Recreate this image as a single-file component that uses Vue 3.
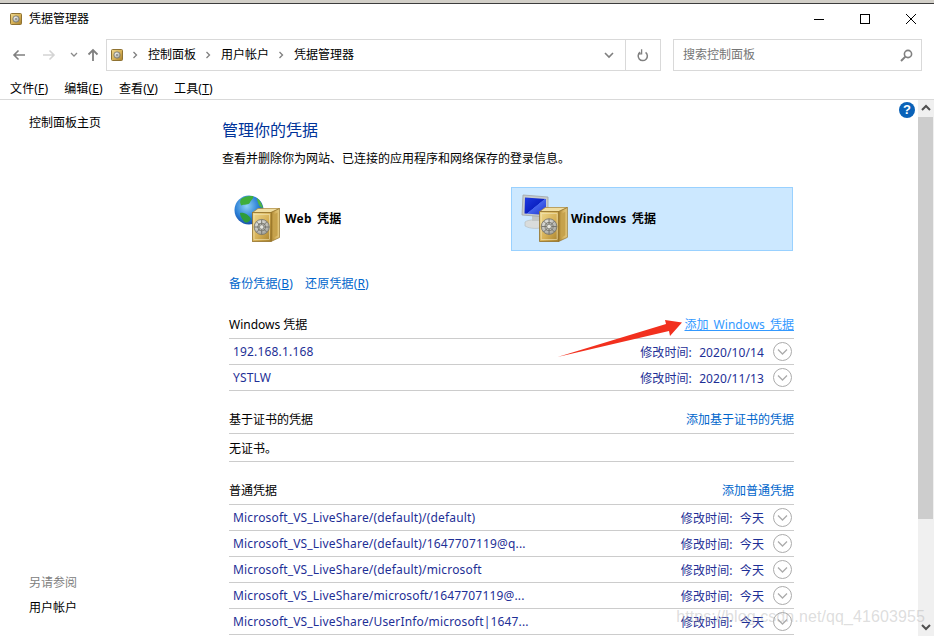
<script setup>
const menus = [
  { label: '文件', key: 'F' },
  { label: '编辑', key: 'E' },
  { label: '查看', key: 'V' },
  { label: '工具', key: 'T' },
]

const crumbs = ['控制面板', '用户帐户', '凭据管理器']

const windowsRows = [
  { name: '192.168.1.168', date: '2020/10/14' },
  { name: 'YSTLW', date: '2020/11/13' },
]

const genericRows = [
  { name: 'Microsoft_VS_LiveShare/(default)/(default)', date: '今天' },
  { name: 'Microsoft_VS_LiveShare/(default)/1647707119@q...', date: '今天' },
  { name: 'Microsoft_VS_LiveShare/(default)/microsoft', date: '今天' },
  { name: 'Microsoft_VS_LiveShare/microsoft/1647707119@...', date: '今天' },
  { name: 'Microsoft_VS_LiveShare/UserInfo/microsoft|1647...', date: '今天' },
]
</script>

<template>
  <div class="window">
    <svg class="defs" width="0" height="0">
      <defs>
        <linearGradient id="gold" x1="0" y1="0" x2="1" y2="1">
          <stop offset="0" stop-color="#efd98f" />
          <stop offset="0.55" stop-color="#d6b055" />
          <stop offset="1" stop-color="#a57f2c" />
        </linearGradient>
        <linearGradient id="goldSide" x1="0" y1="0" x2="1" y2="0">
          <stop offset="0" stop-color="#a9832f" />
          <stop offset="0.5" stop-color="#d3b05c" />
          <stop offset="1" stop-color="#e6cd84" />
        </linearGradient>
        <radialGradient id="dial" cx="0.4" cy="0.35" r="0.8">
          <stop offset="0" stop-color="#f4f4f0" />
          <stop offset="1" stop-color="#8f8f88" />
        </radialGradient>
        <radialGradient id="ocean" cx="0.42" cy="0.36" r="0.75">
          <stop offset="0" stop-color="#8fd2f5" />
          <stop offset="0.55" stop-color="#2b7fd6" />
          <stop offset="1" stop-color="#103c96" />
        </radialGradient>
        <linearGradient id="screen" x1="0" y1="0" x2="1" y2="1">
          <stop offset="0" stop-color="#1f3be0" />
          <stop offset="0.5" stop-color="#0c22c4" />
          <stop offset="0.52" stop-color="#4564ec" />
          <stop offset="1" stop-color="#1b33d0" />
        </linearGradient>
        <symbol id="safe" viewBox="0 0 28 34">
          <path d="M0.5 4.5 L6 0.5 H27.5 L19 4.5 Z" fill="#f0dea2" stroke="#ab8736" stroke-width="0.7" />
          <path d="M19 4.5 L27.5 0.5 V29.5 L19 33.5 Z" fill="url(#goldSide)" stroke="#94722a" stroke-width="0.7" />
          <path d="M21 7 L25.5 4.5 V27.5 L21 30 Z" fill="#c6a24c" />
          <rect x="0.5" y="4.5" width="18.5" height="29" fill="url(#gold)" stroke="#94722a" stroke-width="0.8" />
          <rect x="2" y="6.5" width="15.5" height="25" fill="none" stroke="#f3e6b8" stroke-width="0.6" />
          <circle cx="9.7" cy="19" r="7.6" fill="url(#dial)" stroke="#77756c" stroke-width="0.8" />
          <circle cx="9.7" cy="19" r="4" fill="#bdbdb6" stroke="#6f6e66" stroke-width="0.8" />
          <path d="M9.7 11.5 V26.5 M2.2 19 H17.2 M4.4 13.7 L15 24.3 M15 13.7 L4.4 24.3" stroke="#6f6e66" stroke-width="0.9" />
          <circle cx="9.7" cy="19" r="2.2" fill="#e6e6e0" stroke="#6f6e66" stroke-width="0.6" />
        </symbol>
      </defs>
    </svg>

    <div class="top-strip"></div>

    <header class="titlebar">
      <svg class="title-icon" viewBox="0 0 12 12">
        <rect x="0.5" y="0.5" width="11" height="11" rx="1" fill="url(#gold)" stroke="#8f7232" />
        <circle cx="6" cy="6" r="3.2" fill="url(#dial)" stroke="#6f6e66" stroke-width="0.7" />
        <circle cx="6" cy="6" r="1.1" fill="#8b8a80" />
      </svg>
      <span class="title-text">凭据管理器</span>
      <div class="win-buttons">
        <svg class="win-btn" viewBox="0 0 12 12"><path d="M1 6.5 H11" stroke="#000" fill="none" /></svg>
        <svg class="win-btn" viewBox="0 0 12 12"><rect x="1.5" y="1.5" width="9" height="9" stroke="#000" fill="none" /></svg>
        <svg class="win-btn" viewBox="0 0 12 12"><path d="M1 1 L11 11 M11 1 L1 11" stroke="#000" fill="none" /></svg>
      </div>
    </header>

    <nav class="navbar">
      <div class="nav-buttons">
        <svg class="nav-icon" viewBox="0 0 14 14"><path d="M13 7 H2 M6.5 2.5 L2 7 L6.5 11.5" stroke="#808080" stroke-width="1.6" fill="none" /></svg>
        <svg class="nav-icon forward" viewBox="0 0 14 14"><path d="M1 7 H12 M7.5 2.5 L12 7 L7.5 11.5" stroke="#d4d4d4" stroke-width="1.6" fill="none" /></svg>
        <svg class="nav-chevron" viewBox="0 0 8 6"><path d="M1 1 L4 4 L7 1" stroke="#8a8a8a" stroke-width="1.3" fill="none" /></svg>
        <svg class="nav-icon up" viewBox="0 0 14 14"><path d="M7 13 V2 M2.5 6.5 L7 2 L11.5 6.5" stroke="#808080" stroke-width="1.8" fill="none" /></svg>
      </div>
      <div class="address">
        <svg class="address-icon" viewBox="0 0 12 12">
          <rect x="0.5" y="0.5" width="11" height="11" rx="1" fill="url(#gold)" stroke="#8f7232" />
          <circle cx="6" cy="6" r="3.2" fill="url(#dial)" stroke="#6f6e66" stroke-width="0.7" />
          <circle cx="6" cy="6" r="1.1" fill="#8b8a80" />
        </svg>
        <template v-for="c in crumbs" :key="c">
          <svg class="crumb-sep" viewBox="0 0 6 8"><path d="M1.5 1 L4.5 4 L1.5 7" stroke="#7f7f7f" stroke-width="1.3" fill="none" /></svg>
          <span class="crumb">{{ c }}</span>
        </template>
        <svg class="address-drop" viewBox="0 0 10 7"><path d="M1 1 L5 5 L9 1" stroke="#7f7f7f" stroke-width="1.6" fill="none" /></svg>
        <div class="refresh">
          <svg width="12" height="13" viewBox="0 0 12 13">
            <path d="M8.6 3.4 A4.6 4.6 0 1 1 3.2 3.2" stroke="#808080" stroke-width="1.5" fill="none" />
            <path d="M3.6 0.3 V4.8 H0.2" stroke="#808080" stroke-width="1.3" fill="none" transform="translate(1 0)" />
          </svg>
        </div>
      </div>
      <div class="search">
        <span>搜索控制面板</span>
        <svg width="13" height="13" viewBox="0 0 13 13">
          <circle cx="8" cy="5" r="3.6" stroke="#808080" stroke-width="1.6" fill="none" />
          <path d="M5.4 7.6 L1 12" stroke="#808080" stroke-width="2" />
        </svg>
      </div>
    </nav>

    <div class="menubar">
      <span v-for="m in menus" :key="m.key">{{ m.label }}(<u>{{ m.key }}</u>)</span>
    </div>

    <div class="body">
      <aside class="sidebar">
        <a class="side-home">控制面板主页</a>
        <div class="side-bottom">
          <div class="side-label">另请参阅</div>
          <a class="side-link">用户帐户</a>
        </div>
      </aside>

      <main class="content">
        <h1 class="page-title">管理你的凭据</h1>
        <p class="page-desc">查看并删除你为网站、已连接的应用程序和网络保存的登录信息。</p>

        <div class="tiles">
          <div class="tile tile-web">
            <svg class="tile-icon" viewBox="0 0 50 50">
              <circle cx="16" cy="16" r="14.5" fill="url(#ocean)" />
              <path d="M8 5 C11 2.5 15 1.5 20 2 C21.5 4 18 6 17 8.5 C15.5 11.5 11 10 8.5 11.5 C7 10 6.5 7 8 5 Z" fill="#3fae3a" />
              <path d="M7 19 C11 18 16 21 18 25 C16 28 14 29 12 28.5 C10 26 7 23 7 19 Z" fill="#2f9c3a" />
              <path d="M24 4 C27 6 29 10 30 14 C27 14 24.5 10 24 4 Z" fill="#4cb544" />
              <use href="#safe" x="19" y="14" width="28" height="34" />
            </svg>
            <span class="tile-label">Web 凭据</span>
          </div>
          <div class="tile tile-win">
            <svg class="tile-icon" viewBox="0 0 50 50">
              <path d="M5 28 C8 25 22 25 25 28 L25 33 C18 35 10 35 5 32 Z" fill="#d9dcdc" stroke="#b4b8b8" stroke-width="0.6" />
              <path d="M12 20 H20 V27 H12 Z" fill="#c2c6c6" />
              <path d="M3 1 L28 3 V23 L2 21 Z" fill="#c8cccc" stroke="#a0a4a6" stroke-width="0.8" />
              <path d="M5 3.5 L26 5 V21 L4.5 19.4 Z" fill="url(#screen)" />
              <use href="#safe" x="19" y="13" width="29" height="35" />
            </svg>
            <span class="tile-label">Windows 凭据</span>
          </div>
        </div>

        <div class="backup-links">
          <a>备份凭据(<u>B</u>)</a>
          <a>还原凭据(<u>R</u>)</a>
        </div>

        <section class="cred-section">
          <div class="section-head">
            <span>Windows 凭据</span>
            <a class="add-link active">添加 Windows 凭据</a>
          </div>
          <div v-for="r in windowsRows" :key="r.name" class="cred-row">
            <span class="cred-name">{{ r.name }}</span>
            <span class="cred-date">修改时间: {{ r.date }}</span>
            <svg class="expand" viewBox="0 0 19 19">
              <circle cx="9.5" cy="9.5" r="9" stroke="#ababab" fill="#fff" />
              <path d="M5 7.5 L9.5 12 L14 7.5" stroke="#ababab" stroke-width="1.3" fill="none" />
            </svg>
          </div>
        </section>

        <section class="cred-section">
          <div class="section-head">
            <span>基于证书的凭据</span>
            <a class="add-link">添加基于证书的凭据</a>
          </div>
          <div class="cred-row cred-empty">无证书。</div>
        </section>

        <section class="cred-section">
          <div class="section-head">
            <span>普通凭据</span>
            <a class="add-link">添加普通凭据</a>
          </div>
          <div v-for="r in genericRows" :key="r.name" class="cred-row">
            <span class="cred-name">{{ r.name }}</span>
            <span class="cred-date">修改时间: {{ r.date }}</span>
            <svg class="expand" viewBox="0 0 19 19">
              <circle cx="9.5" cy="9.5" r="9" stroke="#ababab" fill="#fff" />
              <path d="M5 7.5 L9.5 12 L14 7.5" stroke="#ababab" stroke-width="1.3" fill="none" />
            </svg>
          </div>
        </section>
      </main>

      <div class="help">?</div>

      <div class="scrollbar">
        <svg class="scroll-arrow" viewBox="0 0 16 17"><path d="M4 10 L8 6 L12 10" stroke="#505050" stroke-width="2" fill="none" /></svg>
        <div class="scroll-thumb"></div>
        <div class="scroll-track"></div>
        <svg class="scroll-arrow" viewBox="0 0 16 17"><path d="M4 6 L8 10 L12 6" stroke="#505050" stroke-width="2" fill="none" /></svg>
      </div>
    </div>

    <svg class="red-arrow" width="934" height="636" viewBox="0 0 934 636">
      <polygon points="557.5,357 666,324 665,320 682,322.5 670,336 669,331" fill="#f2301e" />
    </svg>
    <div class="watermark">https://blog.csdn.net/qq_41603955</div>
  </div>
</template>

<style>
html,
body {
  margin: 0;
  background: #fff;
}
</style>

<style scoped>
.window {
  position: relative;
  width: 934px;
  height: 636px;
  overflow: hidden;
  display: flex;
  flex-direction: column;
  background: #fff;
  color: #000;
  font-family: "Noto Sans", "Noto Sans CJK SC", sans-serif;
  font-size: 12px;
}

.defs {
  position: absolute;
}

.top-strip {
  height: 3px;
  background: #d2cfc8;
  border-bottom: 1px solid #3c3c3c;
  flex: none;
}

.titlebar {
  height: 29px;
  flex: none;
  display: flex;
  align-items: center;
  padding-left: 10px;
}

.title-icon {
  width: 12px;
  height: 12px;
}

.title-text {
  margin-left: 7px;
  margin-bottom: 2px;
}

.win-buttons {
  margin-left: auto;
  margin-right: 17px;
  display: flex;
  gap: 34px;
}

.win-btn {
  width: 12px;
  height: 12px;
}

.navbar {
  margin-top: 6px;
  height: 32px;
  flex: none;
  display: flex;
  align-items: center;
}

.nav-buttons {
  width: 106px;
  display: flex;
  align-items: center;
  padding-left: 12px;
  box-sizing: border-box;
}

.nav-icon {
  width: 14px;
  height: 14px;
}

.nav-icon.forward {
  margin-left: 16px;
}

.nav-chevron {
  width: 8px;
  height: 6px;
  margin-left: 14px;
}

.nav-icon.up {
  margin-left: 8px;
}

.address {
  width: 555px;
  height: 32px;
  box-sizing: border-box;
  border: 1px solid #d9d9d9;
  display: flex;
  align-items: center;
  padding-left: 4px;
}

.address-icon {
  width: 12px;
  height: 12px;
  margin-right: 9px;
}

.crumb-sep {
  width: 6px;
  height: 8px;
  margin: 0 10px 0 0;
}

.crumb {
  margin-right: 9px;
  margin-bottom: 3px;
}

.address-drop {
  width: 10px;
  height: 7px;
  margin-left: auto;
  margin-right: 11px;
}

.refresh {
  width: 34px;
  height: 100%;
  border-left: 1px solid #d9d9d9;
  display: flex;
  align-items: center;
  justify-content: center;
}

.search {
  margin-left: 12px;
  width: 249px;
  height: 32px;
  box-sizing: border-box;
  border: 1px solid #d9d9d9;
  display: flex;
  align-items: center;
  justify-content: space-between;
  padding: 0 8px 0 9px;
  color: #757575;
}

.search span {
  margin-bottom: 2px;
}

.menubar {
  height: 20px;
  margin-top: 7px;
  padding-bottom: 1px;
  flex: none;
  display: flex;
  align-items: center;
  gap: 16px;
  padding-left: 10px;
  letter-spacing: 0.15px;
}

.body {
  flex: 1;
  min-height: 0;
  border-top: 1px solid #d9d9d9;
  display: flex;
  position: relative;
}

.sidebar {
  width: 222px;
  flex: none;
  box-sizing: border-box;
  padding: 13px 0 0 29px;
  display: flex;
  flex-direction: column;
}

.side-bottom {
  margin-top: 442px;
}

.side-label {
  color: #808080;
  margin-bottom: 7px;
}

.side-link {
  display: block;
}

.content {
  width: 572px;
  flex: none;
}

.page-title {
  margin: 19px 0 0;
  font-size: 16px;
  line-height: 22px;
  font-weight: 400;
  color: #003399;
}

.page-desc {
  margin: 9px 0 0;
  line-height: 18px;
}

.tiles {
  margin: 19px 0 0 7px;
  display: flex;
}

.tile {
  width: 282px;
  height: 64px;
  box-sizing: border-box;
  display: flex;
  align-items: center;
  font-weight: 700;
  letter-spacing: 0.2px;
  word-spacing: 2px;
}

.tile-web {
  padding-left: 4px;
}

.tile-win {
  padding-left: 8px;
  background: #cce8ff;
  border: 1px solid #99d1ff;
}

.tile-icon {
  width: 50px;
  height: 50px;
  flex: none;
}

.tile-label {
  margin-left: 2px;
  margin-bottom: 2px;
}

.tile-win .tile-label {
  margin-left: 1px;
}

.backup-links {
  margin: 24px 0 18px 7px;
  display: flex;
  gap: 12px;
  color: #0066cc;
  line-height: 18px;
  letter-spacing: 0.15px;
}

.cred-section {
  margin-left: 7px;
}

.section-head {
  height: 28px;
  margin-top: 15px;
  box-sizing: border-box;
  border-bottom: 1px solid #cccccc;
  display: flex;
  justify-content: space-between;
  align-items: center;
  padding-bottom: 1px;
}

.add-link {
  color: #0066cc;
}

.add-link.active {
  color: #3399ff;
  text-decoration: underline;
  word-spacing: 2px;
}

.cred-row {
  height: 26px;
  box-sizing: border-box;
  border-bottom: 1px solid #cccccc;
  display: flex;
  align-items: center;
  padding: 0 2px 0 4px;
  color: #1e2f96;
}

.cred-empty {
  height: 28px;
  padding-left: 0;
  color: #000;
}

.cred-name {
  flex: 1;
  min-width: 0;
  white-space: nowrap;
  letter-spacing: 0.17px;
}

.cred-date {
  margin-right: 9px;
  word-spacing: 4px;
  letter-spacing: 0.1px;
}

.expand {
  width: 19px;
  height: 19px;
  flex: none;
}

.help {
  position: absolute;
  left: 899px;
  top: 2px;
  width: 16px;
  height: 16px;
  border-radius: 50%;
  background: #0a62b8;
  color: #fff;
  font: 700 13px/16px "Liberation Sans", sans-serif;
  text-align: center;
}

.scrollbar {
  margin-left: auto;
  width: 16px;
  flex: none;
  background: #f0f0f0;
  display: flex;
  flex-direction: column;
}

.scroll-arrow {
  width: 16px;
  height: 17px;
  flex: none;
}

.scroll-thumb {
  height: 402px;
  flex: none;
  margin-right: 1px;
  background: #cdcdcd;
}

.scroll-track {
  flex: 1;
}

.red-arrow {
  position: absolute;
  left: 0;
  top: 0;
  pointer-events: none;
}

.watermark {
  position: absolute;
  right: 9px;
  top: 608px;
  font: 16px/18px "Liberation Sans", sans-serif;
  letter-spacing: 0.1px;
  color: rgba(170, 170, 170, 0.4);
  white-space: nowrap;
}
</style>
